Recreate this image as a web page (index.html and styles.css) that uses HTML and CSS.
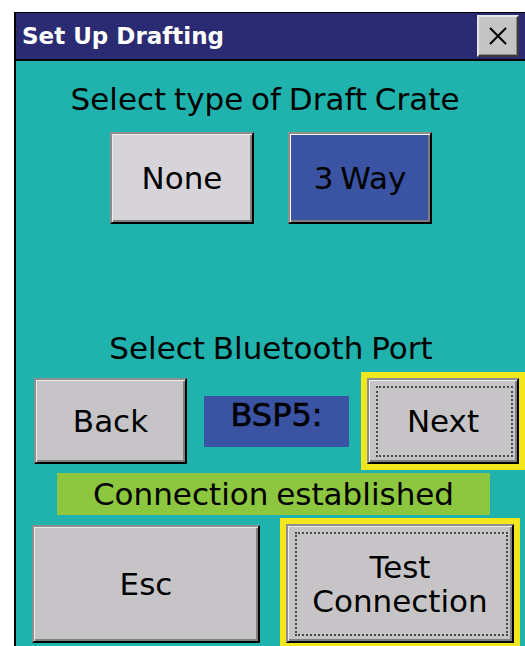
FILE: index.html
```html
<!DOCTYPE html>
<html lang="en">

<head>
    <meta charset="UTF-8" />
    <meta name="viewport" content="width=device-width, initial-scale=1.0" />
    <title>Set Up Drafting</title>
    <link rel="stylesheet" href="styles.css">
</head>

<body>
    <div class="window">
        <div class="titlebar">
            <span class="title">Set Up Drafting</span>
            <button class="close" aria-label="Close">
                <svg width="20" height="20" viewBox="0 0 20 20">
                    <path d="M2 2 L18 18 M18 2 L2 18" stroke="#000" stroke-width="2" fill="none" />
                </svg>
            </button>
        </div>
        <div class="content">
            <h2 class="heading first">Select type of Draft Crate</h2>
            <div class="choices">
                <button class="btn choice">None</button>
                <button class="btn choice selected">3 Way</button>
            </div>

            <h2 class="heading second">Select Bluetooth Port</h2>
            <div class="port-row">
                <button class="btn nav back">Back</button>
                <div class="port">BSP5:</div>
                <div class="focus-ring">
                    <button class="btn nav focused">Next</button>
                </div>
            </div>

            <div class="status">Connection established</div>

            <div class="action-row">
                <button class="btn big esc">Esc</button>
                <div class="focus-ring">
                    <button class="btn big focused">Test<br>Connection</button>
                </div>
            </div>
        </div>
    </div>
</body>

</html>
```

FILE: styles.css
```css
body {
    margin: 0;
    background-color: #fff;
    overflow: hidden;
    font-family: "DejaVu Sans", Verdana, sans-serif;
}

.window {
    margin: 12px 0 0 14px;
    width: 510px;
    height: 640px;
    border-left: 2px solid #000;
    border-top: 1px solid #000;
    display: flex;
    flex-direction: column;
}

.titlebar {
    height: 46px;
    background-color: #2b2b74;
    border-bottom: 2px solid #000;
    display: flex;
    align-items: center;
    justify-content: space-between;
    padding: 0 7px 0 6px;
}

.title {
    color: #fff;
    font-size: 23px;
    font-weight: bold;
}

.close {
    width: 42px;
    height: 42px;
    padding: 0;
    background-color: #c4c4c4;
    border: 2px solid;
    border-color: #e6e6e6 #3a3a3a #3a3a3a #e6e6e6;
    box-shadow: inset -1px -1px 0 #8a8a8a;
    display: flex;
    align-items: center;
    justify-content: center;
}

.content {
    flex: 1;
    background-color: #20b2ad;
    display: flex;
    flex-direction: column;
}

.heading {
    margin: 0;
    font-size: 31px;
    font-weight: normal;
    line-height: 36px;
    text-align: center;
    color: #000;
    word-spacing: -2px;
}

.first {
    margin-top: 20px;
    padding-right: 12px;
}

.second {
    margin-top: 106px;
}

/* shared raised button */
.btn {
    font-family: "DejaVu Sans", Verdana, sans-serif;
    font-size: 31px;
    line-height: 34px;
    color: #000;
    background-color: #c6c4c7;
    border: 2px solid;
    border-color: #8e8e8e #000 #000 #8e8e8e;
    box-shadow: inset 1px 1px 0 #ececec, inset -2px -2px 0 #808080;
    padding: 0;
    box-sizing: border-box;
    display: flex;
    align-items: center;
    justify-content: center;
    text-align: center;
}

.choices {
    display: flex;
    justify-content: center;
    gap: 34px;
    margin-top: 15px;
}

.choice {
    width: 144px;
    height: 92px;
    background-color: #d6d4d8;
    word-spacing: -3px;
}

.selected {
    background-color: #3a53a3;
    box-shadow: inset 1px 1px 0 #fff, inset -2px -2px 0 #7d7d7d;
}

.port-row {
    display: flex;
    align-items: center;
    margin-top: 6px;
    padding-left: 18px;
}

.nav {
    width: 152px;
    height: 86px;
}

.back {
    width: 153px;
}

.port {
    width: 145px;
    height: 51px;
    box-sizing: border-box;
    margin: 0 12px 0 17px;
    padding-top: 1px;
    background-color: #3a53a3;
    font-size: 32px;
    line-height: 36px;
    text-align: center;
    -webkit-text-stroke: 0.6px #000;
}

.focus-ring {
    border: 6px solid #f4e61c;
}

.focused {
    position: relative;
}

.focused::after {
    content: "";
    position: absolute;
    top: 6px;
    left: 7px;
    right: 4px;
    bottom: 5px;
    border: 2px dotted #4a4a4a;
}

.status {
    margin: 3px 0 0 41px;
    width: 433px;
    height: 42px;
    background-color: #8dc63f;
    font-size: 31px;
    line-height: 42px;
    text-align: center;
    word-spacing: -2px;
}

.action-row {
    display: flex;
    align-items: flex-start;
    gap: 20px;
    margin-top: 3px;
    padding-left: 16px;
}

.big {
    width: 228px;
    height: 119px;
}

.esc {
    margin-top: 7px;
    height: 118px;
}
```
